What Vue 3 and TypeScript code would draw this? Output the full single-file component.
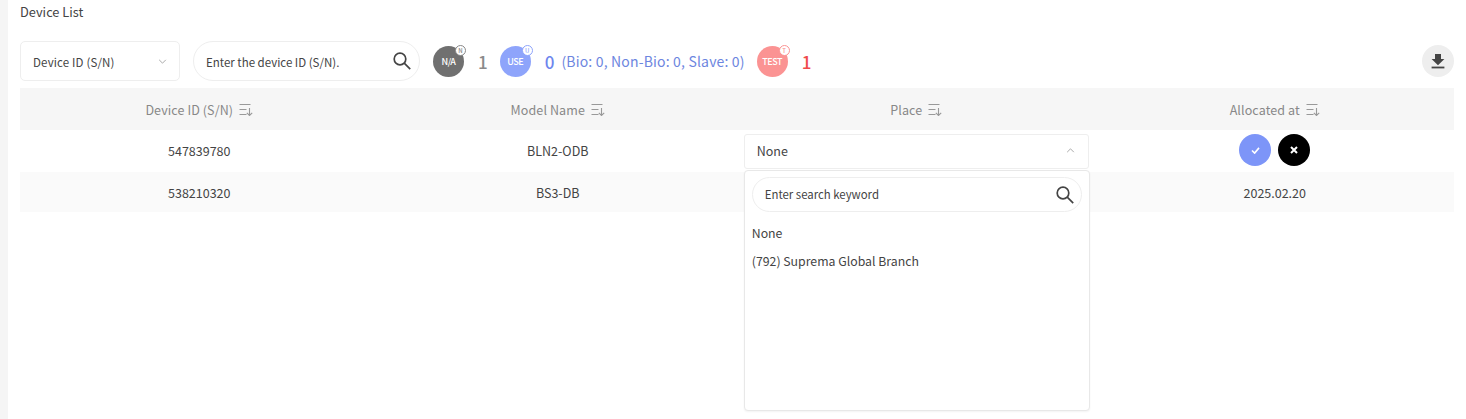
<template>
  <div class="page">
    <div class="title">Device List</div>

    <div class="toolbar">
      <div class="type-select">
        <span>Device ID (S/N)</span>
        <svg class="chev" viewBox="0 0 10 6" width="9" height="5"><path d="M1 1l4 4 4-4" /></svg>
      </div>
      <div class="search">
        <span>Enter the device ID (S/N).</span>
        <svg class="mag" viewBox="0 0 18 18" width="18" height="18"><circle cx="7" cy="7" r="5.8" /><path d="M11.2 11.2l6 6" /></svg>
      </div>

      <div class="stats">
        <div v-for="s in stats" :key="s.label" class="stat" :class="s.cls">
          <div class="badge">
            {{ s.label }}
            <span class="mini">{{ s.mini }}</span>
          </div>
          <span class="count">{{ s.count }}</span>
          <span v-if="s.extra" class="extra">{{ s.extra }}</span>
        </div>
      </div>

      <button class="download">
        <svg viewBox="0 0 14 16" width="14" height="16"><path d="M4 1h6v5h3.4L7 12.2.6 6H4z" /><rect x="0.6" y="13.6" width="12.8" height="1.8" /></svg>
      </button>
    </div>

    <div class="table">
      <div class="row head">
        <div v-for="h in headers" :key="h" class="cell">
          {{ h }}
          <svg class="sort" viewBox="0 0 14 13" width="14" height="13">
            <path d="M0.5 1.5h11M0.5 6.5h7M0.5 11.5h7M10.5 5v7.5M7.8 9.8l2.7 2.7 2.7-2.7" />
          </svg>
        </div>
      </div>

      <div class="row first">
        <div class="cell">547839780</div>
        <div class="cell">BLN2-ODB</div>
        <div class="cell">
          <div class="place-wrap">
            <div class="place">
              <span>None</span>
              <svg class="chev up" viewBox="0 0 10 6" width="9" height="5"><path d="M1 5l4-4 4 4" /></svg>
            </div>
            <div class="menu">
              <div class="menu-search">
                <span>Enter search keyword</span>
                <svg class="mag" viewBox="0 0 18 18" width="18" height="18"><circle cx="7" cy="7" r="5.8" /><path d="M11.2 11.2l6 6" /></svg>
              </div>
              <div class="option">None</div>
              <div class="option">(792) Suprema Global Branch</div>
            </div>
          </div>
        </div>
        <div class="cell actions">
          <button class="round ok">
            <svg viewBox="0 0 10 8" width="9" height="7"><path d="M1 4l3 3 5-6" /></svg>
          </button>
          <button class="round cancel">
            <svg viewBox="0 0 8 8" width="8" height="8"><path d="M1 1l6 6M7 1l-6 6" /></svg>
          </button>
        </div>
      </div>

      <div class="row second">
        <div class="cell">538210320</div>
        <div class="cell">BS3-DB</div>
        <div class="cell"></div>
        <div class="cell">2025.02.20</div>
      </div>
    </div>
  </div>
</template>

<script setup lang="ts">
interface Stat {
  label: string
  mini: string
  count: number
  cls: string
  extra?: string
}

const headers = ["Device ID (S/N)", "Model Name", "Place", "Allocated at"]

const stats: Stat[] = [
  { label: "N/A", mini: "N", count: 1, cls: "na" },
  { label: "USE", mini: "U", count: 0, cls: "use", extra: "(Bio: 0, Non-Bio: 0, Slave: 0)" },
  { label: "TEST", mini: "T", count: 1, cls: "test" },
]
</script>

<style>
html,
body {
  background: #fff;
  overflow: hidden;
}
</style>

<style scoped>
.page {
  box-sizing: border-box;
  width: 1466px;
  height: 419px;
  padding: 0 12px;
  border-left: 8px solid #f5f5f5;
  font-family: "Noto Sans CJK KR", "Noto Sans", sans-serif;
  font-size: 13px;
  color: #444;
  overflow: hidden;
}
.title {
  height: 41px;
  padding-top: 2px;
  box-sizing: border-box;
  line-height: 19px;
  font-size: 12.8px;
  color: #444;
}
.toolbar {
  display: flex;
  align-items: center;
  height: 40px;
  margin-bottom: 7px;
}
.type-select {
  box-sizing: border-box;
  width: 160px;
  height: 40px;
  display: flex;
  align-items: center;
  justify-content: space-between;
  padding: 1px 12px 0;
  border: 1px solid #eee;
  border-radius: 5px;
  font-size: 11.5px;
  letter-spacing: 0.15px;
  color: #444;
}
.chev {
  fill: none;
  stroke: #999;
  stroke-width: 1;
}
.search {
  box-sizing: border-box;
  width: 227px;
  height: 40px;
  margin-left: 13px;
  display: flex;
  align-items: center;
  justify-content: space-between;
  padding: 0 8px 0 12px;
  border: 1px solid #eee;
  border-radius: 20px;
  font-size: 11.5px;
  color: #444;
}
.search span {
  padding-top: 1px;
}
.mag {
  fill: none;
  stroke: #444;
  stroke-width: 1.7;
}
.stats {
  display: flex;
  align-items: center;
  margin-left: 13px;
}
.stat {
  display: flex;
  align-items: center;
}
.stat.use {
  margin-left: 12px;
}
.stat.test {
  margin-left: 12px;
}
.badge {
  position: relative;
  width: 31px;
  height: 31px;
  border-radius: 50%;
  display: flex;
  align-items: center;
  justify-content: center;
  color: #fff;
  font-size: 9px;
  font-weight: 500;
  letter-spacing: -0.5px;
}
.na .badge {
  background: #707070;
}
.use .badge {
  background: #8ea4fb;
}
.test .badge {
  background: #fb9393;
}
.mini {
  position: absolute;
  top: -1px;
  right: -2px;
  box-sizing: border-box;
  width: 11px;
  height: 11px;
  border-radius: 50%;
  background: #fff;
  border: 1px solid currentColor;
  font-size: 6px;
  line-height: 9px;
  text-align: center;
  letter-spacing: 0;
}
.na .mini {
  color: #888;
}
.use .mini {
  color: #8ea4fb;
}
.test .mini {
  color: #fb9393;
}
.count {
  margin-left: 14px;
  font-size: 17px;
  font-weight: 500;
}
.na .count {
  color: #8a8a8a;
}
.use .count {
  color: #6d86ee;
}
.test .count {
  color: #f04b4b;
}
.extra {
  margin-left: 7px;
  font-size: 14px;
  letter-spacing: 0.17px;
  color: #6d86e0;
}
.download {
  margin-left: auto;
  width: 32px;
  height: 32px;
  padding: 0;
  border: none;
  border-radius: 50%;
  background: #eee;
  display: flex;
  align-items: center;
  justify-content: center;
  fill: #444;
}
.table {
  width: 1434px;
}
.row {
  display: grid;
  grid-template-columns: repeat(4, 1fr);
  align-items: center;
}
.cell {
  display: flex;
  align-items: center;
  justify-content: center;
  gap: 6px;
  font-size: 12.5px;
  color: #444;
}
.head {
  height: 42px;
  background: #f6f6f6;
}
.head .cell {
  color: #888;
  letter-spacing: 0.1px;
}
.sort {
  fill: none;
  stroke: #999;
  stroke-width: 1.1;
}
.first {
  height: 42px;
}
.first .cell {
  padding-bottom: 2px;
}
.second {
  height: 40px;
  background: #fafafa;
}
.place-wrap {
  position: relative;
  width: 345px;
  margin-top: 3px;
}
.place {
  box-sizing: border-box;
  height: 35px;
  display: flex;
  align-items: center;
  justify-content: space-between;
  padding: 0 13px 2px 12px;
  border: 1px solid #eee;
  border-radius: 3px;
  background: #fff;
}
.menu {
  position: absolute;
  top: 36px;
  left: 0;
  box-sizing: border-box;
  width: 346px;
  height: 241px;
  padding: 6px 7px 7px;
  background: #fff;
  border: 1px solid #e8e8e8;
  border-radius: 4px;
  box-shadow: 0 1px 2px rgba(0, 0, 0, 0.05);
  z-index: 2;
}
.menu-search {
  box-sizing: border-box;
  height: 35px;
  display: flex;
  align-items: center;
  justify-content: space-between;
  padding: 0 7px 0 12px;
  border: 1px solid #eee;
  border-radius: 18px;
  font-size: 11.4px;
  margin-bottom: 7px;
}
.menu-search span {
  padding-bottom: 2px;
}
.option {
  height: 28px;
  line-height: 28px;
  font-size: 12.3px;
}
.actions {
  gap: 7px;
}
.round {
  width: 32px;
  height: 32px;
  padding: 0;
  border: none;
  border-radius: 50%;
  display: flex;
  align-items: center;
  justify-content: center;
  fill: none;
  stroke: #fff;
}
.ok {
  background: #7d95f8;
  stroke-width: 1.8;
}
.cancel {
  background: #000;
  stroke-width: 2;
}
</style>
